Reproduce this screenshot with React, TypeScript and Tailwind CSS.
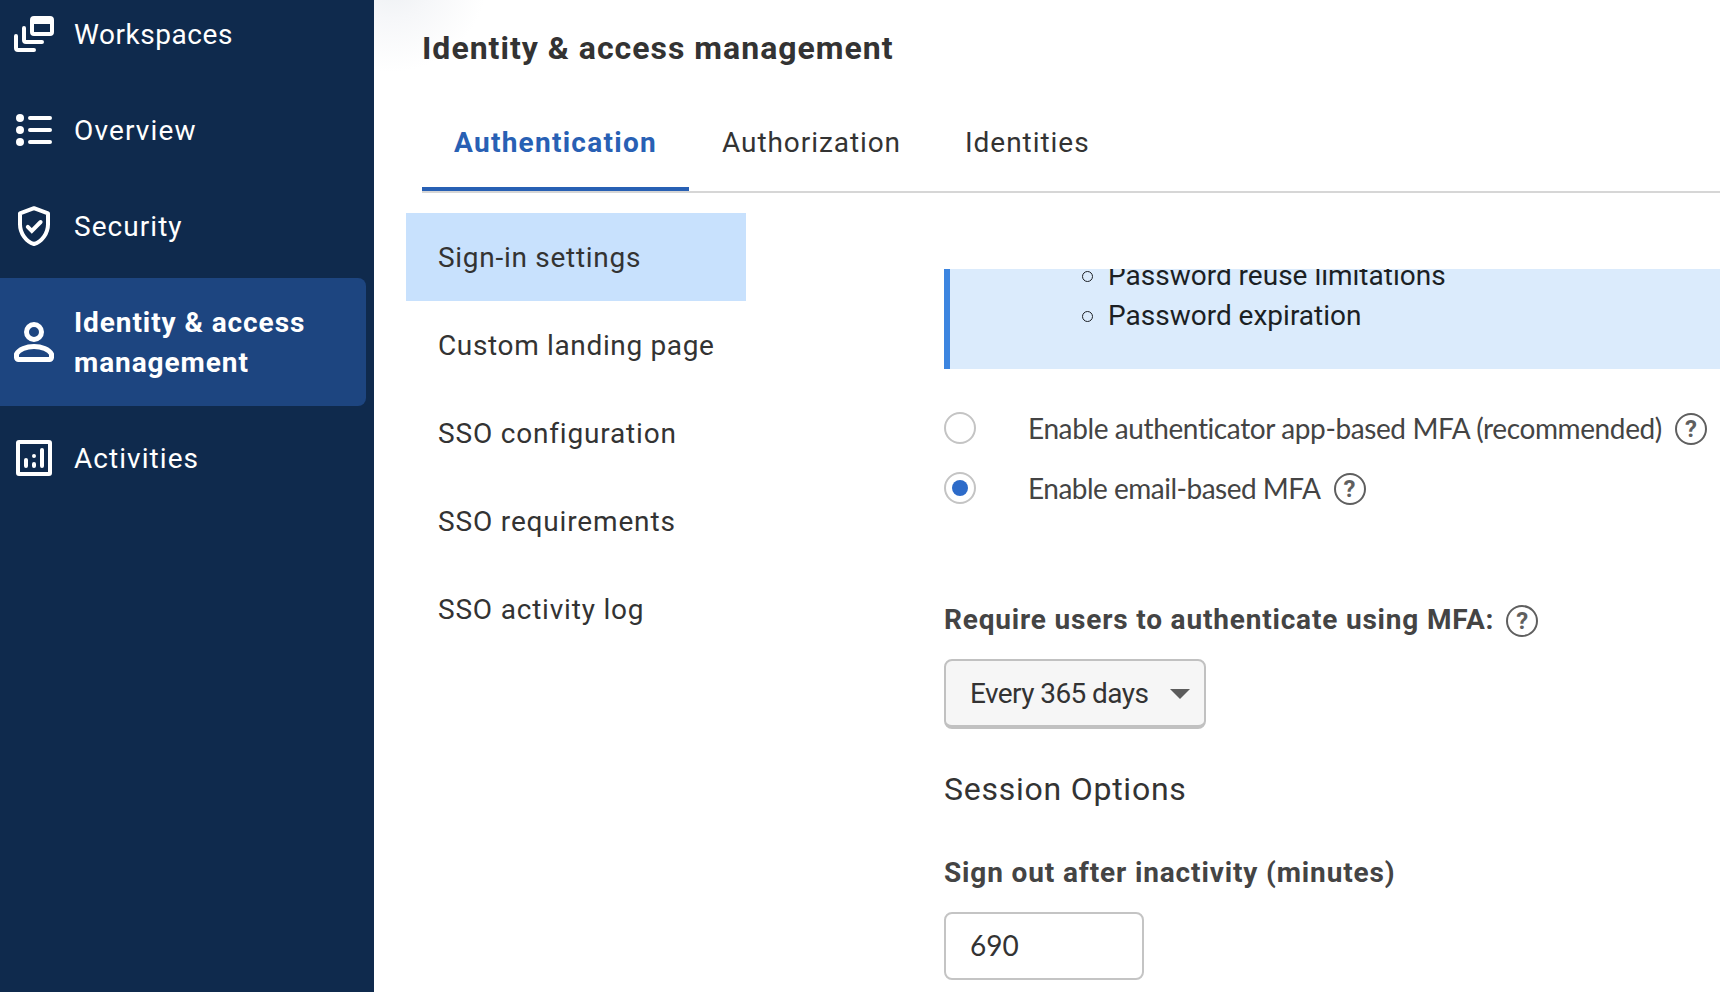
import { ReactNode } from 'react'
import clsx from 'clsx'

function NavIcon({ children }: { children: ReactNode }) {
  return (
    <svg
      viewBox="0 0 24 24"
      className="w-12 h-12 shrink-0"
      fill="none"
      stroke="currentColor"
      strokeWidth="2"
      strokeLinecap="round"
      strokeLinejoin="round"
    >
      {children}
    </svg>
  )
}

const navItems = [
  {
    label: 'Workspaces',
    tracking: 'tracking-[0.55px]',
    icon: (
      <NavIcon>
        <path d="M3 13v6a1 1 0 0 0 1 1h8" />
        <path d="M7 9v6a1 1 0 0 0 1 1h8" />
        <path
          d="M12 3h8a2 2 0 0 1 2 2v6a2 2 0 0 1-2 2h-8a2 2 0 0 1-2-2V5a2 2 0 0 1 2-2Zm0 4v4h8V7Z"
          fill="currentColor"
          fillRule="evenodd"
          stroke="none"
        />
      </NavIcon>
    ),
  },
  {
    label: 'Overview',
    tracking: 'tracking-[1.15px]',
    icon: (
      <NavIcon>
        <g fill="currentColor" stroke="none">
          <circle cx="5" cy="6" r="2" />
          <circle cx="5" cy="12" r="2" />
          <circle cx="5" cy="18" r="2" />
        </g>
        <path d="M10 6h10M10 12h10M10 18h10" />
      </NavIcon>
    ),
  },
  {
    label: 'Security',
    tracking: 'tracking-[1.05px]',
    icon: (
      <NavIcon>
        <path d="M12 3.1 5 5.7v5.4c0 4.5 3 8.7 7 9.9 4-1.2 7-5.4 7-9.9V5.7Z" />
        <path d="m8.9 12.4 2 2 4.4-4.4" strokeLinejoin="miter" />
      </NavIcon>
    ),
  },
  {
    label: 'Identity & access management',
    tracking: 'tracking-[0.92px]',
    active: true,
    icon: (
      <NavIcon>
        <g strokeWidth="2.5">
          <circle cx="12" cy="7" r="3.75" />
          <path d="M3.25 18c1.2-2.4 5-3.75 8.75-3.75s7.550 1.350 8.750 3.750v1.750a1 1 0 0 1-1 1H4.250a1 1 0 0 1-1-1Z" />
        </g>
      </NavIcon>
    ),
  },
  {
    label: 'Activities',
    tracking: 'tracking-[1.05px]',
    icon: (
      <NavIcon>
        <rect x="4" y="4" width="16" height="16" rx="0.5" />
        <path d="M8 13v3M12 15v1M12 11v0M16 8v8" />
      </NavIcon>
    ),
  },
]

const sections = [
  { label: 'Sign-in settings', tracking: 'tracking-[0.72px]', active: true },
  { label: 'Custom landing page', tracking: 'tracking-[0.65px]' },
  { label: 'SSO configuration', tracking: 'tracking-[0.82px]' },
  { label: 'SSO requirements', tracking: 'tracking-[0.84px]' },
  { label: 'SSO activity log', tracking: 'tracking-[0.8px]' },
]

function Help() {
  return (
    <span className="w-8 h-8 mt-0.5 shrink-0 rounded-full border-2 border-[#5f5f5f] text-[#5f5f5f] font-bold text-2xl leading-7 text-center font-['Roboto',sans-serif]">
      ?
    </span>
  )
}

function Radio({ checked }: { checked?: boolean }) {
  return (
    <span className="w-8 h-8 shrink-0 rounded-full border-2 border-[#c4c4c4] flex items-center justify-center">
      {checked && <span className="w-4 h-4 rounded-full bg-[#2d6bc9]" />}
    </span>
  )
}

export default function App() {
  return (
    <div className="flex h-screen overflow-hidden bg-white text-[#333] text-[28px] leading-10 font-['Roboto',sans-serif]">
      <aside className="w-[374px] shrink-0 bg-[#0f2a4d] text-white">
        <nav className="-mt-2.5 flex flex-col gap-2">
          {navItems.map((item) => (
            <div
              key={item.label}
              className={clsx(
                'flex items-center gap-4 pl-2.5 pr-8 mr-2',
                item.active ? 'h-32 rounded-r-lg bg-[#1d4580] font-bold' : 'h-22',
              )}
            >
              {item.icon}
              <span className={clsx('pt-0.5', item.tracking)}>{item.label}</span>
            </div>
          ))}
        </nav>
      </aside>

      <main className="flex-1 min-w-0 bg-[radial-gradient(circle_96px_at_18px_-24px,#eceff2,#f6f7f9_45%,#ffffff)]">
        <h1 className="pt-6 pl-12 text-[32px] leading-[48px] font-bold tracking-[1px]">
          Identity & access management
        </h1>

        <div className="ml-12 mt-[26px] flex border-b-2 border-[#d6d6d6]">
          <div className="w-[267px] h-[93px] pl-8 pt-[25px] border-b-4 border-[#2860b4] text-[#2860b4] font-bold tracking-[1.27px]">
            Authentication
          </div>
          <div className="w-[243px] pl-8 pt-[25px] ml-px tracking-[0.93px]">Authorization</div>
          <div className="pl-8 pt-[25px] tracking-[0.96px]">Identities</div>
        </div>

        <div className="flex pl-8 pt-5">
          <div className="w-[340px] shrink-0">
            {sections.map((s) => (
              <div
                key={s.label}
                className={clsx('h-22 pl-8 pt-0.5 flex items-center', s.tracking, s.active && 'bg-[#c8e1fd]')}
              >
                {s.label}
              </div>
            ))}
          </div>

          <div className="flex-1 min-w-0 ml-[198px] pt-14">
            {/* scrolled list, first line is partly clipped */}
            <div className="h-[100px] overflow-hidden flex flex-col justify-end pb-[33px] border-l-[6px] border-[#3c85e0] bg-[#dbebfc] text-[#1b1f24]">
              {['Password reuse limitations', 'Password expiration'].map((t) => (
                <div key={t} className="flex shrink-0 items-center pl-[132px] gap-[15px]">
                  <span className="w-[11px] h-[11px] rounded-full border-[1.5px] border-[#1b1f24]" />
                  {t}
                </div>
              ))}
            </div>

            <div className="mt-[39px] flex flex-col gap-5 text-[#444] whitespace-nowrap">
              <label className="flex items-center h-10">
                <Radio />
                <span className="ml-[52px] mr-[13px] font-['Lato',sans-serif] tracking-[-0.39px]">
                  Enable authenticator app-based MFA (recommended)
                </span>
                <Help />
              </label>
              <label className="flex items-center h-10">
                <Radio checked />
                <span className="ml-[52px] mr-[13px] font-['Lato',sans-serif] tracking-[-0.5px]">
                  Enable email-based MFA
                </span>
                <Help />
              </label>
            </div>

            <div className="mt-[92px] flex items-center text-[#444]">
              <span className="mr-[12px] font-bold tracking-[0.82px]">
                Require users to authenticate using MFA:
              </span>
              <Help />
            </div>

            <div className="mt-[19px] w-[262px] h-[70px] flex items-center justify-between pl-6 pr-[14px] rounded-lg border-2 border-b-4 border-[#c1c1c1] bg-[#f6f6f6]">
              <span className="pt-0.5 tracking-[-0.58px]">Every 365 days</span>
              <svg viewBox="0 0 20 10" className="w-5 h-2.5 mt-0.5 text-[#5c5c5c]">
                <path d="M0 0h20L10 10Z" fill="currentColor" />
              </svg>
            </div>

            <h2 className="mt-10 text-[32px] leading-10 tracking-[0.75px]">Session Options</h2>

            <div className="mt-11 font-bold text-[#444] tracking-[0.86px]">
              Sign out after inactivity (minutes)
            </div>
            <div className="mt-[19px] w-[200px] h-[68px] pl-6 pb-0.5 flex items-center rounded-lg border-2 border-[#c4c4c4] font-['Lato',sans-serif]">
              690
            </div>
          </div>
        </div>
      </main>
    </div>
  )
}
